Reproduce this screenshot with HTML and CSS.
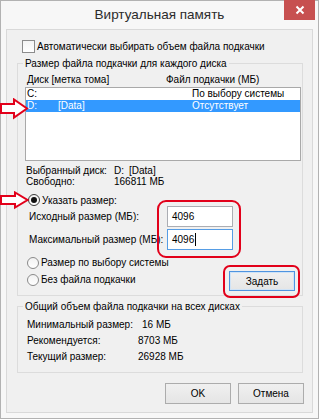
FILE: index.html
```html
<!DOCTYPE html>
<html lang="ru">
<head>
<meta charset="utf-8">
<title>Виртуальная память</title>
<link rel="stylesheet" href="styles.css">
</head>
<body>
<div class="window">
  <div class="titlebar">
    <span class="title">Виртуальная память</span>
    <span class="close"><svg width="10" height="10" viewBox="0 0 10 10"><path d="M1.5 1.5 L8.5 8.5 M8.5 1.5 L1.5 8.5" stroke="#fff" stroke-width="2" fill="none"/></svg></span>
  </div>
  <div class="client">
    <div class="check-row"><span class="checkbox"></span><span>Автоматически выбирать объем файла подкачки</span></div>

    <fieldset class="group group-disks">
      <legend>Размер файла подкачки для каждого диска</legend>
      <div class="list-head"><span>Диск [метка тома]</span><span>Файл подкачки (МБ)</span></div>
      <div class="listbox">
        <div class="list-row"><span>C:</span><span></span><span>По выбору системы</span></div>
        <div class="list-row selected"><span>D:</span><span>[Data]</span><span>Отсутствует</span></div>
      </div>
      <div class="info">
        <span>Выбранный диск:</span><span>D:<span class="vol">[Data]</span></span>
        <span>Свободно:</span><span>166811 МБ</span>
      </div>
      <div class="radio-row first"><span class="radio checked"></span><span>Указать размер:</span></div>
      <div class="size-grid">
        <span>Исходный размер (МБ):</span><span class="textbox">4096</span>
        <span>Максимальный размер (МБ):</span><span class="textbox focused">4096<span class="caret"></span></span>
      </div>
      <div class="bottom-row">
        <div class="radios">
          <div class="radio-row"><span class="radio"></span><span>Размер по выбору системы</span></div>
          <div class="radio-row"><span class="radio"></span><span>Без файла подкачки</span></div>
        </div>
        <span class="button default">Задать</span>
      </div>
    </fieldset>

    <fieldset class="group group-total">
      <legend>Общий объем файла подкачки на всех дисках</legend>
      <div class="totals">
        <span>Минимальный размер:</span><span class="indent">16 МБ</span>
        <span>Рекомендуется:</span><span>8703 МБ</span>
        <span>Текущий размер:</span><span>26928 МБ</span>
      </div>
    </fieldset>

    <div class="buttons"><span class="button">OK</span><span class="button">Отмена</span></div>
  </div>

  <svg class="arrow arrow-1" width="30" height="23" viewBox="0 0 30 23"><path d="M1 6 H14 V1.5 L27 10.5 L14 19.5 V15 H1 Z" fill="#fff" stroke="#e2001a" stroke-width="2" stroke-linejoin="miter"/></svg>
  <svg class="arrow arrow-2" width="30" height="19" viewBox="0 0 30 19"><path d="M1 5 H15 V1.5 L27.5 9 L15 16.5 V13 H1 Z" fill="#fff" stroke="#e2001a" stroke-width="2" stroke-linejoin="miter"/></svg>
  <div class="mark mark-inputs"></div>
  <div class="mark mark-button"></div>
</div>
</body>
</html>
```

FILE: styles.css
```css
html, body {
  margin: 0;
  padding: 0;
  background: #ffffff;
}
body {
  font-family: "Liberation Sans", Arial, sans-serif;
  font-size: 10px;
  color: #000;
  white-space: nowrap;
}
.window {
  position: relative;
  box-sizing: border-box;
  width: 319px;
  height: 419px;
  border: 1px solid #b2b2b2;
  background: #f7f7f7;
  padding: 0 5px 5px 5px;
  display: flex;
  flex-direction: column;
}
.titlebar {
  height: 28px;
  flex: none;
  display: flex;
  align-items: center;
  justify-content: center;
}
.title {
  font-size: 13.5px;
  color: #2b2b2b;
  line-height: 28px;
}
.close {
  position: absolute;
  top: -1px;
  right: 3px;
  width: 31px;
  height: 20px;
  background: #c75050;
  display: flex;
  align-items: center;
  justify-content: center;
}
.client {
  flex: 1;
  background: #f0f0f0;
  border: 1px solid #d9d9d9;
}
.check-row {
  display: flex;
  align-items: center;
  gap: 2px;
  height: 13px;
  margin: 10px 0 0 15px;
  line-height: 13px;
}
.checkbox {
  box-sizing: border-box;
  width: 13px;
  height: 13px;
  border: 1px solid #8c8c8c;
  background: linear-gradient(#f4f4f4, #ffffff);
}
.group {
  margin: 0 9px 0 10px;
  border: 1px solid #dcdcdc;
  min-width: 0;
}
.group legend {
  padding: 0 2px;
  margin-left: -2px;
  line-height: 13px;
}
.group-disks {
  margin-top: 4px;
  padding: 3px 7px 4px 7px;
}
.list-head {
  display: grid;
  grid-template-columns: 139px 1fr;
  padding-left: 2px;
  line-height: 13px;
}
.listbox {
  box-sizing: border-box;
  width: 276px;
  height: 74px;
  margin-top: 1px;
  background: #fff;
  border: 1px solid #a9a9a9;
}
.list-row {
  display: grid;
  grid-template-columns: 31px 134px 1fr;
  padding-left: 1px;
  line-height: 12px;
  height: 12px;
}
.list-row.selected {
  background: #3399ff;
  color: #fff;
}
.info {
  display: grid;
  grid-template-columns: 88px 1fr;
  padding-left: 1px;
  margin-top: 4px;
  line-height: 11px;
}
.vol {
  margin-left: 5px;
}
.radio-row {
  display: flex;
  align-items: center;
  gap: 2px;
  line-height: 13px;
  height: 13px;
  padding-left: 2px;
}
.radio-row.first {
  margin-top: 7px;
  height: 12px;
  padding-left: 3px;
}
.radio {
  box-sizing: border-box;
  width: 12px;
  height: 12px;
  border-radius: 50%;
  border: 1px solid #8a8a8a;
  background: linear-gradient(#f2f2f2, #ffffff);
  display: flex;
  align-items: center;
  justify-content: center;
}
.radio.checked {
  border-color: #3c3c3c;
}
.radio.checked::after {
  content: "";
  width: 6px;
  height: 6px;
  border-radius: 50%;
  background: #111;
}
.size-grid {
  display: grid;
  grid-template-columns: 138px 66px;
  row-gap: 2px;
  align-items: center;
  padding-left: 4px;
}
.textbox {
  box-sizing: border-box;
  height: 21px;
  line-height: 19px;
  padding-left: 4px;
  background: #fff;
  border: 1px solid #abadb3;
  display: flex;
  align-items: center;
}
.textbox.focused {
  border-color: #569de5;
}
.caret {
  width: 1px;
  height: 13px;
  background: #000;
  margin-left: 1px;
}
.bottom-row {
  display: flex;
  justify-content: space-between;
  align-items: flex-start;
  margin-top: 6px;
}
.radios {
  display: flex;
  flex-direction: column;
  gap: 4px;
}
.button {
  box-sizing: border-box;
  width: 66px;
  height: 21px;
  border: 1px solid #acacac;
  background: linear-gradient(#f0f0f0, #e5e5e5);
  display: flex;
  align-items: center;
  justify-content: center;
  line-height: 13px;
}
.button.default {
  margin-top: 15px;
  height: 20px;
  border-color: #4f94e0;
  box-shadow: inset 0 0 0 1px #cfe3f7;
}
.group-total {
  margin-top: 4px;
  padding: 4px 7px 7px 7px;
}
.totals {
  display: grid;
  grid-template-columns: 111px 1fr;
  padding-left: 2px;
  line-height: 16px;
}
.indent {
  padding-left: 4px;
}
.buttons {
  display: flex;
  justify-content: flex-end;
  gap: 7px;
  margin: 10px 8px 0 0;
}
.arrow {
  position: absolute;
}
.arrow-1 {
  left: -1px;
  top: 97px;
}
.arrow-2 {
  left: -1px;
  top: 190px;
}
.mark {
  position: absolute;
  box-sizing: border-box;
  border: 2px solid #e2001a;
}
.mark-inputs {
  left: 156px;
  top: 199px;
  width: 84px;
  height: 58px;
  border-radius: 9px;
}
.mark-button {
  left: 222px;
  top: 264px;
  width: 77px;
  height: 33px;
  border-radius: 7px;
}
```
